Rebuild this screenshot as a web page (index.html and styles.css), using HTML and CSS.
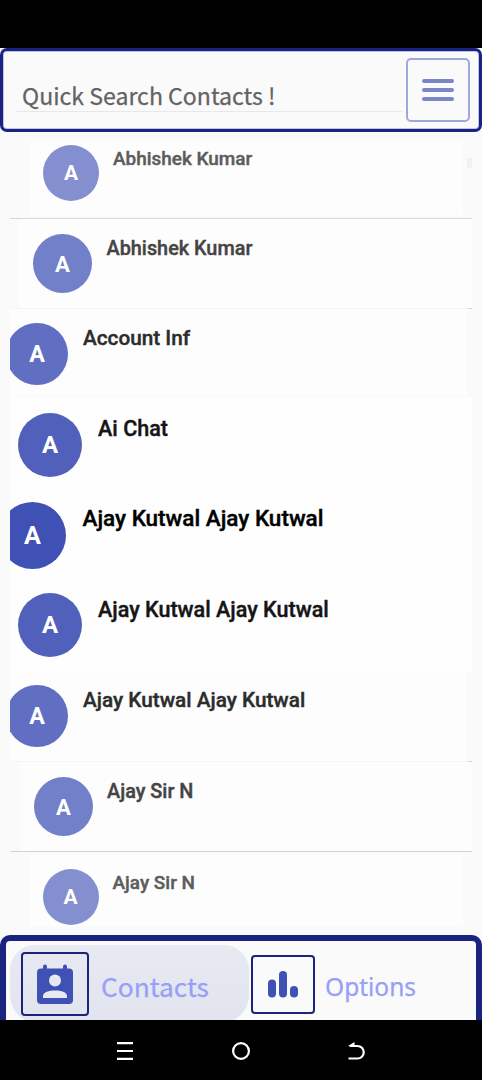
FILE: index.html
```html
<!DOCTYPE html>
<html lang="en">
<head>
<meta charset="utf-8">
<title>Contacts</title>
<link rel="stylesheet" href="styles.css">
</head>
<body>
<div class="status"></div>
<header class="search">
  <div class="field"><span class="hint">Quick Search Contacts !</span></div>
  <button class="menu" aria-label="Menu"><svg width="34" height="24" viewBox="0 0 34 24"><path d="M3 3H31M3 12H31M3 21H31" stroke="#7986c8" stroke-width="4" stroke-linecap="round"/></svg></button>
</header>
<main class="list">
  <div class="row r1"><div class="card"><span class="avatar">A</span><span class="name">Abhishek Kumar</span></div></div>
  <div class="row r2"><div class="card"><span class="avatar">A</span><span class="name">Abhishek Kumar</span></div></div>
  <div class="row r3"><div class="card"><span class="avatar">A</span><span class="name">Account Inf</span></div></div>
  <div class="row r4"><div class="card"><span class="avatar">A</span><span class="name">Ai Chat</span></div></div>
  <div class="row r5"><div class="card"><span class="avatar">A</span><span class="name">Ajay Kutwal Ajay Kutwal</span></div></div>
  <div class="row r6"><div class="card"><span class="avatar">A</span><span class="name">Ajay Kutwal Ajay Kutwal</span></div></div>
  <div class="row r7"><div class="card"><span class="avatar">A</span><span class="name">Ajay Kutwal Ajay Kutwal</span></div></div>
  <div class="row r8"><div class="card"><span class="avatar">A</span><span class="name">Ajay Sir N</span></div></div>
  <div class="row r9"><div class="card"><span class="avatar">A</span><span class="name">Ajay Sir N</span></div></div>
  <i class="thumb"></i>
</main>
<nav class="tabs">
  <div class="tab active">
    <span class="icon contact"><svg width="36" height="40" viewBox="0 0 36 40"><path d="M8 2.500V7M28 2.500V7" stroke="#3f51b5" stroke-width="4" stroke-linecap="round"/><rect y="4.500" width="36" height="35.500" rx="4" fill="#3f51b5"/><circle cx="18" cy="16.500" r="6" fill="#e6e9f2"/><path d="M6 34V32C6 24.800 30 24.800 30 32V34Z" fill="#e6e9f2"/></svg></span>
    <span class="label">Contacts</span>
  </div>
  <div class="tab">
    <span class="icon chart"><svg width="30" height="27" viewBox="0 0 30 27"><g fill="#3f51b5"><rect y="8.500" width="8" height="18" rx="4"/><rect x="11" width="8" height="26.500" rx="4"/><rect x="22" y="15" width="8" height="11.500" rx="4"/></g></svg></span>
    <span class="label options">Options</span>
  </div>
</nav>
<footer class="system">
  <svg class="recents" width="16" height="18" viewBox="0 0 16 18"><path d="M0 1.200H16M0 9H16M0 16.800H16" stroke="#fff" stroke-width="2.200"/></svg>
  <svg class="home" width="18" height="18" viewBox="0 0 18 18"><circle cx="9" cy="9" r="7.900" fill="none" stroke="#fff" stroke-width="2.200"/></svg>
  <svg class="back" width="17" height="18" viewBox="0 0 17 18"><path d="M1.500 4H9.500A6.200 6.200 0 0 1 9.500 16.500H.5" fill="none" stroke="#fff" stroke-width="2.200"/><path d="M0 4L6.500 0V4Z" fill="#fff"/></svg>
</footer>
</body>
</html>
```
FILE: styles.css
```css
* { box-sizing: border-box; }
body { margin: 0; width: 482px; height: 1080px; overflow: hidden; background: #fafafa; font-family: Roboto, sans-serif; display: flex; flex-direction: column; }
.status { height: 48px; background: #000; }
.search { height: 84px; border: 3px solid #1a237e; border-radius: 7px; display: flex; padding: 7px 9px 6px 13px; box-shadow: inset 0 0 0 1px #bcc4f0; }
.field { width: 386px; height: 54px; border-bottom: 1px solid #e8e8ec; padding: 15px 0 0 6px; }
.hint { display: block; font: 23.100px/44px "Noto Sans CJK SC", "Noto Sans", sans-serif; color: #636363; -webkit-text-stroke: .25px #636363; white-space: nowrap; }
.menu { width: 64px; height: 64px; margin-left: 4px; padding: 0 0 1px; border: 2px solid #9fa8da; border-radius: 5px; background: none; display: grid; place-items: center; }
.list { position: relative; height: 803px; padding: 0 10px; overflow: hidden; }
.thumb { position: absolute; left: 467px; top: 26px; width: 5px; height: 10px; background: #f0f0f5; }
.row { height: var(--h); border-bottom: 1px solid var(--line, transparent); overflow: hidden; }
.card { height: 100%; display: flex; background: #fdfdfd; overflow: hidden; }
.avatar { flex: none; width: var(--d); height: var(--d); margin: var(--at) 0 0 var(--ax); border-radius: 50%; background: var(--c); color: #fff; font-weight: 700; font-size: calc(var(--d) * .375); line-height: calc(var(--d) + 1px); text-align: center; }
.name { margin: var(--nt) 0 0 var(--nx); font-weight: 500; font-size: var(--f); line-height: 32px; color: var(--t); -webkit-text-stroke: .4px var(--t); white-space: nowrap; }
.r1 { --h: 87px; --line: #d8d8d8; --d: 56px; --at: 5px; --ax: 13px; --nx: 14px; --nt: 3px; --f: 18.950px; --c: #848fd0; --t: #5c5c5c; padding: 8px 9px 3px 20px; }
.r2 { --h: 90px; --line: #f4f4f4; --d: 59px; --at: 15px; --ax: 14px; --nx: 14.500px; --nt: 14px; --f: 19.850px; --c: #727fc9; --t: #444; padding-left: 9px; }
.r3 { --h: 88px; --d: 62px; --at: 14px; --ax: -4px; --nx: 15px; --nt: 13px; --f: 20.750px; --c: #616fc2; --t: #2c2c2c; padding-right: 5px; }
.r4 { --h: 91px; --d: 64px; --at: 16px; --ax: 8px; --nx: 16px; --nt: 16px; --f: 21.550px; --c: #5160bb; --t: #151515; }
.r5 { --h: 92px; --d: 67px; --at: 14px; --ax: -11px; --nx: 16.500px; --nt: 14px; --f: 22.500px; --c: #3f51b5; --t: #000; }
.r6 { --h: 93px; --d: 64px; --at: 13px; --ax: 8px; --nx: 16px; --nt: 14px; --f: 21.550px; --c: #5160bb; --t: #151515; }
.r4, .r5, .r6 { --line: #fefefe; }
.r4 .card, .r5 .card, .r6 .card { background: #fefefe; }
.r7 { --h: 89px; --line: #f4f4f4; --d: 62px; --at: 12px; --ax: -4px; --nx: 15px; --nt: 11px; --f: 20.750px; --c: #616fc2; --t: #2c2c2c; padding-right: 5px; }
.r2, .r7 { border-image: linear-gradient(to right, #f5f5f5 457px, #d4d4d4 457px) 1; }
.r8 { --h: 90px; --line: #d0d2d4; --d: 59px; --at: 15px; --ax: 14px; --nx: 14px; --nt: 14px; --f: 19.850px; --c: #727fc9; --t: #444; padding-left: 10px; }
.r9 { --h: 83px; --d: 56px; --at: 14px; --ax: 12.500px; --nx: 14px; --nt: 12px; --f: 18.950px; --c: #848fd0; --t: #5c5c5c; padding: 3px 9px 9px 20px; border-bottom: 0; }
.tabs { height: 85px; border: 6px solid #1a237e; border-bottom: 0; border-radius: 10px 10px 0 0; display: flex; padding: 4px 4px 0; overflow: hidden; }
.tab { height: 78px; display: flex; align-items: center; }
.tab.active { width: 239px; padding-left: 11px; border-radius: 25px 25px 28px 28px; background: linear-gradient(#e8eaf2, #e1e4ee); }
.icon { display: grid; place-items: center; border: 2px solid #1a237e; border-radius: 4px; }
.contact { width: 68px; height: 64px; padding-bottom: 1px; }
.chart { width: 64px; height: 59px; margin-left: 2px; }
.label { margin: 4px 0 0 12px; font: 26.300px/40px "Noto Sans CJK SC", "Noto Sans", sans-serif; color: #979ff7; -webkit-text-stroke: .25px #979ff7; }
.options { margin: 6px 0 0 10px; font: 24.500px/40px "Noto Sans", sans-serif; }
.system { height: 60px; background: #000; display: flex; align-items: center; padding: 1px 0 0 117px; }
.home { margin-left: 99px; }
.back { margin-left: 98px; }
```
